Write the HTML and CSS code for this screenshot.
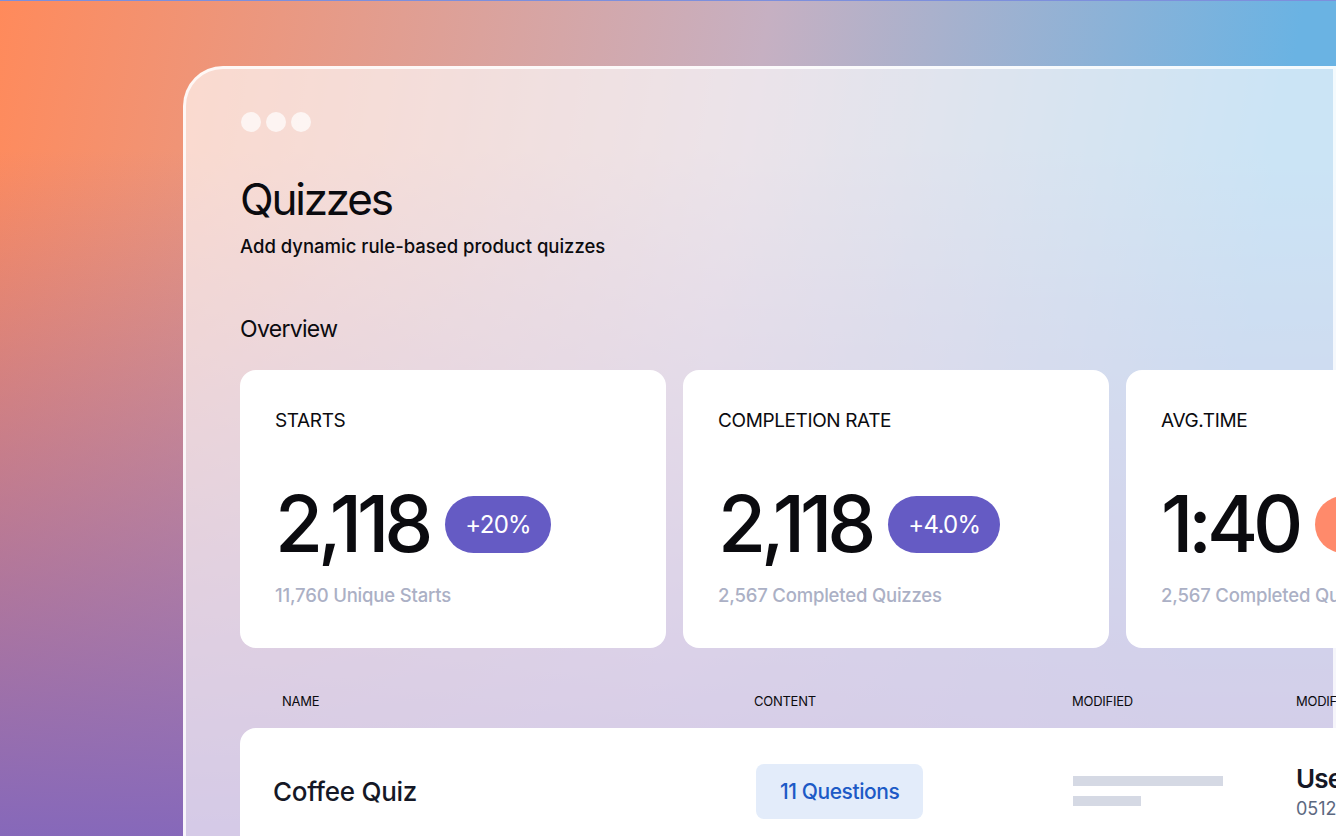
FILE: index.html
```html
<!DOCTYPE html>
<html lang="en">
<head>
  <meta charset="UTF-8" />
  <meta name="viewport" content="width=device-width, initial-scale=1.0"/>
  <title>Quizzes</title>
  <link rel="stylesheet" href="styles.css">
</head>
<body>
  <div class="window">
    <div class="dots">
      <span></span><span></span><span></span>
    </div>

    <h1>Quizzes</h1>
    <p class="subtitle">Add dynamic rule-based product quizzes</p>

    <h2>Overview</h2>

    <div class="cards">
      <div class="card">
        <div class="label">STARTS</div>
        <div class="figure">
          <span class="number">2,118</span>
          <span class="badge">+20%</span>
        </div>
        <div class="note">11,760 Unique Starts</div>
      </div>
      <div class="card">
        <div class="label">COMPLETION RATE</div>
        <div class="figure">
          <span class="number">2,118</span>
          <span class="badge">+4.0%</span>
        </div>
        <div class="note">2,567 Completed Quizzes</div>
      </div>
      <div class="card">
        <div class="label">AVG.TIME</div>
        <div class="figure">
          <span class="number">1:40</span>
          <span class="badge orange">-12%</span>
        </div>
        <div class="note">2,567 Completed Quizzes</div>
      </div>
    </div>

    <div class="table-head">
      <span>NAME</span>
      <span>CONTENT</span>
      <span>MODIFIED</span>
      <span>MODIFIED BY</span>
    </div>

    <div class="table-row">
      <div class="quiz-name">Coffee Quiz</div>
      <div><span class="pill">11 Questions</span></div>
      <div class="placeholder">
        <span class="bar long"></span>
        <span class="bar short"></span>
      </div>
      <div class="user">
        <div class="user-name">User Admin</div>
        <div class="user-date">051224</div>
      </div>
    </div>
  </div>
</body>
</html>
```

FILE: styles.css
```css
body {
  margin: 0;
  height: 836px;
  overflow: hidden;
  font-family: Inter, 'Liberation Sans', sans-serif;
  color: #0b0b0f;
  border-top: 1px solid #7d8fdc;
  box-sizing: border-box;
  background:
    linear-gradient(to bottom, rgba(134, 104, 186, 0) 18%, rgba(134, 104, 186, 1) 100%),
    linear-gradient(100deg, #ff8a5b 0%, #c6b0c2 52%, #6ab3e3 88%);
}

.window {
  margin: 65px 0 0 183px;
  width: 1153px;
  height: 900px;
  box-sizing: border-box;
  border: 3px solid rgba(255, 255, 255, 0.8);
  border-radius: 40px 0 0 0;
  background: rgba(255, 255, 255, 0.65);
  padding: 43px 0 0 54px;
}

.dots {
  display: flex;
  gap: 5px;
  padding-left: 1px;
}

.dots span {
  width: 20px;
  height: 20px;
  border-radius: 50%;
  background: rgba(255, 255, 255, 0.7);
}

h1 {
  margin: 45px 0 0;
  font-size: 44px;
  line-height: 44px;
  font-weight: 400;
  letter-spacing: -0.05em;
}

.subtitle {
  margin: 14px 0 0;
  font-size: 18.5px;
  line-height: 22px;
  font-weight: 500;
  letter-spacing: 0;
}

h2 {
  margin: 58px 0 0;
  font-size: 23px;
  line-height: 28px;
  font-weight: 400;
  letter-spacing: -0.03em;
}

.cards {
  display: flex;
  gap: 17px;
  margin-top: 27px;
}

.card {
  flex: 0 0 426px;
  height: 278px;
  box-sizing: border-box;
  background: #fff;
  border-radius: 16px;
  padding: 40px 0 0 35px;
}

.label {
  font-size: 19px;
  line-height: 22px;
  letter-spacing: -0.02em;
}

.figure {
  display: flex;
  align-items: center;
  gap: 17px;
  margin-top: 53px;
}

.number {
  font-size: 78px;
  line-height: 78px;
  font-weight: 500;
  letter-spacing: -0.065em;
}

.badge {
  height: 57px;
  padding: 0 20px;
  border-radius: 29px;
  background: #655bc4;
  color: #fff;
  font-size: 24px;
  line-height: 57px;
  letter-spacing: -0.03em;
}

.badge.orange {
  background: #ff8a6b;
}

.note {
  margin-top: 21px;
  font-size: 18.5px;
  line-height: 22px;
  font-weight: 500;
  color: #abb0c5;
  letter-spacing: -0.01em;
}

.table-head {
  display: grid;
  grid-template-columns: 472px 318px 224px 1fr;
  margin-top: 45px;
  padding-left: 42px;
  font-size: 13px;
  line-height: 16px;
  letter-spacing: -0.02em;
  white-space: nowrap;
}

.table-row {
  display: grid;
  grid-template-columns: 483px 317px 223px 1fr;
  align-items: center;
  margin-top: 19px;
  width: 1100px;
  padding: 35px 0 40px 33px;
  background: #fff;
  border-radius: 16px 0 0 0;
  white-space: nowrap;
}

.quiz-name {
  font-size: 26px;
  font-weight: 500;
  letter-spacing: -0.01em;
  color: #151826;
}

.pill {
  display: inline-block;
  padding: 0 24px;
  height: 55px;
  line-height: 55px;
  border-radius: 8px;
  background: #e3ecfa;
  color: #1d5ac6;
  font-size: 21px;
  font-weight: 500;
  letter-spacing: -0.02em;
}

.placeholder {
  display: flex;
  flex-direction: column;
  gap: 10px;
}

.bar {
  height: 10px;
  background: #d5d9e4;
}

.bar.long {
  width: 150px;
}

.bar.short {
  width: 68px;
}

.user-name {
  font-size: 26px;
  font-weight: 600;
  letter-spacing: -0.03em;
  color: #151826;
}

.user-date {
  margin-top: 4px;
  font-size: 18px;
  color: #5c6880;
}
```
